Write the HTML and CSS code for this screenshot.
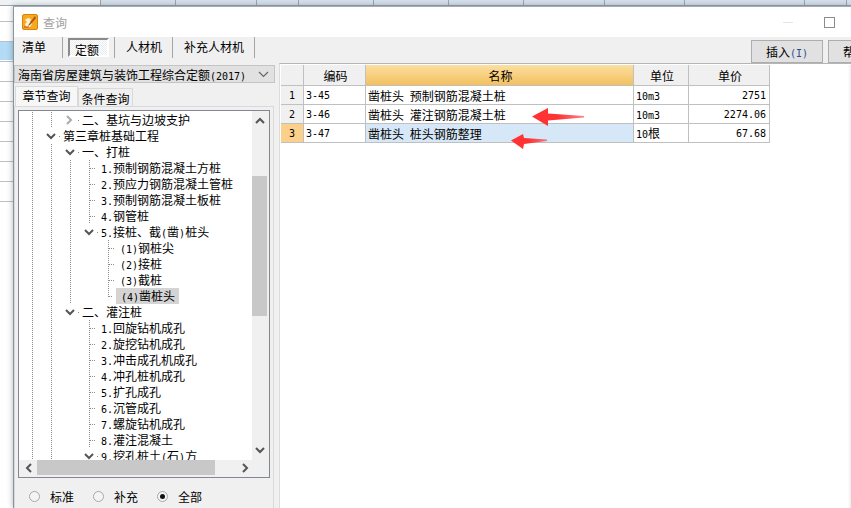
FILE: index.html
```html
<!doctype html>
<html lang="zh-CN">
<head>
  <meta charset="utf-8" />
  <meta name="viewport" content="width=device-width,initial-scale=1" />
  <title>查询</title>
  <link rel="stylesheet" href="styles.css">
</head>
<body>
<div class="desk">
  <div class="sheet-top">
    <i class="c1"></i><i class="c2"></i><i class="c3"></i><i class="c4"></i><i class="c2"></i><i class="c2"></i><i class="c2"></i><i class="c3"></i><i class="c5"></i><i class="c6"></i><i class="c4"></i>
  </div>
  <div class="sheet-left"></div>

  <div class="window">
    <div class="titlebar">
      <svg class="app-icon" width="16" height="16" viewBox="0 0 16 16">
        <rect x="0.5" y="0.5" width="15" height="15" rx="1.5" fill="#f6a81f" stroke="#d9820c"/>
        <path d="M3 6c2-2 4-2 6-1l-1 3 2 2-2 3H4l-1-3 2-2z" fill="#fdf3d6"/>
        <path d="M13 2L7 10l-1 2 2-1 6-7z" fill="#a8521a"/>
        <path d="M2 13h5" stroke="#c4441a"/>
      </svg>
      <span class="win-title">查询</span>
      <span class="win-min"></span>
      <span class="win-max"></span>
    </div>

    <div class="toolbar">
      <div class="tool tool-first">清单</div>
      <div class="tool tool-mid"><span class="pressed">定额</span></div>
      <div class="tool">人材机</div>
      <div class="tool">补充人材机</div>
      <div class="actions">
        <button class="btn">插入<span class="num accel">(I)</span></button>
        <button class="btn">帮助<span class="num accel">(H)</span></button>
      </div>
    </div>

    <div class="main">
      <div class="left">
        <div class="combo">
          <span>海南省房屋建筑与装饰工程综合定额<span class="num">(2017)</span></span>
          <svg width="11" height="7" viewBox="0 0 11 7"><path d="M1 1l4.500 4.500L10 1" fill="none" stroke="#666" stroke-width="1.200"/></svg>
        </div>
        <div class="tabs">
          <div class="tab active">章节查询</div>
          <div class="tab">条件查询</div>
        </div>
        <div class="pane">
          <div class="treebox">
            <div class="tree-top">
              <div class="tree">
                <div class="row"><i class="g"></i><i class="g"></i><i class="x"><svg width="7" height="10" viewBox="0 0 7 10"><path d="M1 1l4 4-4 4" fill="none" stroke="#aaa" stroke-width="2"/></svg></i><span class="label">二、基坑与边坡支护</span></div>
                <div class="row"><i class="g"></i><i class="x"><svg width="10" height="7" viewBox="0 0 10 7"><path d="M1 1l4 4 4-4" fill="none" stroke="#555" stroke-width="2"/></svg></i><span class="label">第三章桩基础工程</span></div>
                <div class="row"><i class="g"></i><i class="g"></i><i class="x"><svg width="10" height="7" viewBox="0 0 10 7"><path d="M1 1l4 4 4-4" fill="none" stroke="#555" stroke-width="2"/></svg></i><span class="label">一、打桩</span></div>
                <div class="row"><i class="g"></i><i class="g"></i><i class="g"></i><i class="g tee"></i><span class="label"><span class="num">1.</span>预制钢筋混凝土方桩</span></div>
                <div class="row"><i class="g"></i><i class="g"></i><i class="g"></i><i class="g tee"></i><span class="label"><span class="num">2.</span>预应力钢筋混凝土管桩</span></div>
                <div class="row"><i class="g"></i><i class="g"></i><i class="g"></i><i class="g tee"></i><span class="label"><span class="num">3.</span>预制钢筋混凝土板桩</span></div>
                <div class="row"><i class="g"></i><i class="g"></i><i class="g"></i><i class="g tee"></i><span class="label"><span class="num">4.</span>钢管桩</span></div>
                <div class="row"><i class="g"></i><i class="g"></i><i class="g"></i><i class="x"><svg width="10" height="7" viewBox="0 0 10 7"><path d="M1 1l4 4 4-4" fill="none" stroke="#555" stroke-width="2"/></svg></i><span class="label"><span class="num">5.</span>接桩、截<span class="num">(</span>凿<span class="num">)</span>桩头</span></div>
                <div class="row"><i class="g"></i><i class="g"></i><i class="g"></i><i class="b"></i><i class="g tee"></i><span class="label"><span class="num">(1)</span>钢桩尖</span></div>
                <div class="row"><i class="g"></i><i class="g"></i><i class="g"></i><i class="b"></i><i class="g tee"></i><span class="label"><span class="num">(2)</span>接桩</span></div>
                <div class="row"><i class="g"></i><i class="g"></i><i class="g"></i><i class="b"></i><i class="g tee"></i><span class="label"><span class="num">(3)</span>截桩</span></div>
                <div class="row"><i class="g"></i><i class="g"></i><i class="g"></i><i class="b"></i><i class="g elbow"></i><span class="label selected"><span class="num">(4)</span>凿桩头</span></div>
                <div class="row"><i class="g"></i><i class="g"></i><i class="x"><svg width="10" height="7" viewBox="0 0 10 7"><path d="M1 1l4 4 4-4" fill="none" stroke="#555" stroke-width="2"/></svg></i><span class="label">二、灌注桩</span></div>
                <div class="row"><i class="g"></i><i class="g"></i><i class="b"></i><i class="g tee"></i><span class="label"><span class="num">1.</span>回旋钻机成孔</span></div>
                <div class="row"><i class="g"></i><i class="g"></i><i class="b"></i><i class="g tee"></i><span class="label"><span class="num">2.</span>旋挖钻机成孔</span></div>
                <div class="row"><i class="g"></i><i class="g"></i><i class="b"></i><i class="g tee"></i><span class="label"><span class="num">3.</span>冲击成孔机成孔</span></div>
                <div class="row"><i class="g"></i><i class="g"></i><i class="b"></i><i class="g tee"></i><span class="label"><span class="num">4.</span>冲孔桩机成孔</span></div>
                <div class="row"><i class="g"></i><i class="g"></i><i class="b"></i><i class="g tee"></i><span class="label"><span class="num">5.</span>扩孔成孔</span></div>
                <div class="row"><i class="g"></i><i class="g"></i><i class="b"></i><i class="g tee"></i><span class="label"><span class="num">6.</span>沉管成孔</span></div>
                <div class="row"><i class="g"></i><i class="g"></i><i class="b"></i><i class="g tee"></i><span class="label"><span class="num">7.</span>螺旋钻机成孔</span></div>
                <div class="row"><i class="g"></i><i class="g"></i><i class="b"></i><i class="g tee"></i><span class="label"><span class="num">8.</span>灌注混凝土</span></div>
                <div class="row"><i class="g"></i><i class="g"></i><i class="b"></i><i class="x"><svg width="10" height="7" viewBox="0 0 10 7"><path d="M1 1l4 4 4-4" fill="none" stroke="#555" stroke-width="2"/></svg></i><span class="label"><span class="num">9.</span>挖孔桩土<span class="num">(</span>石<span class="num">)</span>方</span></div>
              </div>
              <div class="vscroll">
                <svg width="10" height="7" viewBox="0 0 10 7"><path d="M1 6l4-4 4 4" fill="none" stroke="#555" stroke-width="2"/></svg>
                <div class="vtrack"><div class="vthumb"></div></div>
                <svg width="10" height="7" viewBox="0 0 10 7"><path d="M1 1l4 4 4-4" fill="none" stroke="#555" stroke-width="2"/></svg>
              </div>
            </div>
            <div class="hscroll">
              <span class="harrow"><svg width="7" height="10" viewBox="0 0 7 10"><path d="M6 1L2 5l4 4" fill="none" stroke="#555" stroke-width="2"/></svg></span>
              <div class="hthumb"></div>
              <span class="harrow harrow-r"><svg width="7" height="10" viewBox="0 0 7 10"><path d="M1 1l4 4-4 4" fill="none" stroke="#555" stroke-width="2"/></svg></span>
            </div>
          </div>
          <div class="radios">
            <label class="radio"><i class="dot"></i>标准</label>
            <label class="radio"><i class="dot"></i>补充</label>
            <label class="radio"><i class="dot on"></i>全部</label>
          </div>
        </div>
      </div>

      <div class="right">
        <table class="grid">
          <thead>
            <tr><th class="rn"></th><th class="code">编码</th><th class="name cur">名称</th><th class="unit">单位</th><th class="price">单价</th></tr>
          </thead>
          <tbody>
            <tr><td class="rn num">1</td><td class="num">3-45</td><td class="txt">凿桩头 预制钢筋混凝土桩</td><td><span class="num">10m3</span></td><td class="num amt">2751</td></tr>
            <tr><td class="rn num">2</td><td class="num">3-46</td><td class="txt">凿桩头 灌注钢筋混凝土桩</td><td><span class="num">10m3</span></td><td class="num amt">2274.06</td></tr>
            <tr class="sel"><td class="rn num">3</td><td class="num">3-47</td><td class="txt">凿桩头 桩头钢筋整理</td><td><span class="num">10</span>根</td><td class="num amt">67.68</td></tr>
          </tbody>
        </table>
      </div>
    </div>
  </div>

  <!-- red arrows drawn over the grid -->
  <svg class="arrow arrow-a" width="54" height="18" viewBox="0 0 54 18">
    <defs><linearGradient id="fade" x1="0" x2="1" y1="0" y2="0"><stop offset="0.5" stop-color="#ff3333"/><stop offset="1" stop-color="#ff3333" stop-opacity="0.6"/></linearGradient></defs>
    <path d="M1 8.500L17 0v5.500l36 2.500v1.500L17 12.500V18z" fill="url(#fade)"/>
  </svg>
  <svg class="arrow arrow-b" width="38" height="16" viewBox="0 0 38 16">
    <path d="M1 7.500L13 1l1 4 23 1.500v1.500L14 11l-1 5z" fill="url(#fade)"/>
  </svg>
</div>
</body>
</html>
```

FILE: styles.css
```css
:root{
  --face:#f0f0f0; --line:#c0c0c0; --btn:#e1e1e1; --btn-line:#adadad;
  font-family: "Noto Sans CJK SC", "Liberation Sans", sans-serif;
  font-size:12px;
}
html,body{margin:0;padding:0;background:#fff;color:#000}
.num{font-family:"DejaVu Sans Mono","Liberation Mono",monospace;font-size:10px}

/* spreadsheet behind the dialog */
.desk{position:relative;width:851px;height:508px;overflow:hidden;background:#fff}
.desk::after{content:"";position:absolute;right:0;top:65px;bottom:0;width:3px;background:linear-gradient(90deg,#fff,#ececec)}
.sheet-top{display:flex;height:6px;background:#d6e0ea;border-bottom:1px solid #9aa7b3;box-sizing:border-box}
.sheet-top i{display:block;box-sizing:border-box;height:100%;border-right:1px solid #9aa7b3}
.sheet-top .c1{width:101px;background:#eef2f5}
.sheet-top .c2{width:75px}
.sheet-top .c3{width:81px}
.sheet-top .c4{width:42px}
.sheet-top .c5{width:80px}
.sheet-top .c6{width:120px}
.sheet-left{position:absolute;left:0;top:6px;width:13px;height:215px;background:
  linear-gradient(#b3dbf5,#b3dbf5) 0 36px/100% 18px no-repeat,
  repeating-linear-gradient(transparent 0 15px,#b9c2c9 15px 16px,transparent 16px 20px) 0 0/100% 100%}

/* dialog */
.window{position:absolute;left:13px;top:6px;right:0;bottom:0;overflow:hidden;background:var(--face);border-left:1px solid #87949f;border-top:1px solid #a3adb6;box-shadow:0 0 6px rgba(0,0,0,.3)}
.titlebar{display:flex;align-items:center;height:30px;background:#fff;padding:0 16px 0 8px}
.app-icon{flex:none}
.win-title{margin-left:5px;color:#a0a0a0}
.win-min{margin-left:auto;width:10px;height:1px;background:#e4e4e4}
.win-max{margin-left:31px;width:9px;height:9px;border:1px solid #8c8c8c}

.toolbar{display:flex;align-items:flex-start;height:27px}
.tool{height:21px;line-height:20px;padding:0 10px 0 11px;border-right:1px solid #a5a5a5}
.tool-first{width:40px;padding:0 0 0 8px}
.tool-mid{display:flex;width:41px;padding:0 5px;justify-content:center}
.pressed{box-sizing:border-box;display:block;width:41px;height:19px;margin-top:1px;padding-left:5px;line-height:20px;
  border:2px solid;border-color:#8a8a8a #fff #fff #8a8a8a;background:repeating-conic-gradient(#fff 0 25%,#ececec 0 50%) 0 0/2px 2px}
.actions{display:flex;gap:5px;margin:3px -49px 0 auto}
.btn{box-sizing:border-box;width:72px;height:23px;padding:0;background:var(--btn);border:1px solid var(--btn-line);font:inherit;color:#000}
.accel{color:#1f4f8f}

.main{display:flex;height:445px}
.left{width:265px;flex:none;padding-top:1px}
.combo{display:flex;align-items:center;justify-content:space-between;box-sizing:border-box;width:261px;height:18px;padding:0 5px 0 3px;background:var(--btn);border:1px solid #c4c4c4}
.tabs{display:flex;align-items:flex-end;height:20px;margin:3px 0 0 1px}
.tab{box-sizing:border-box;width:55px;height:18px;line-height:19px;text-align:center;background:var(--face);border:1px solid #d9d9d9;border-bottom:none}
.tab.active{width:63px;height:20px;background:#f7f7f7;line-height:18px}
.pane{box-sizing:border-box;width:260px;height:402px;padding:3px;border:1px solid #d9d9d9;border-bottom:none}
.treebox{box-sizing:border-box;height:368px;border:1px solid #828790;background:var(--face)}
.tree-top{display:flex;height:349px}
.tree{flex:1;overflow:hidden;background:#fff;padding-top:1px}
.row{display:flex;height:16px;line-height:16px;white-space:nowrap}
.row i{display:block;flex:none;width:19px;height:16px}
.g{background:repeating-linear-gradient(#8a8a8a 0 1px,transparent 1px 2px) 13px 0/1px 100% no-repeat}
.g.tee{background:
  repeating-linear-gradient(#8a8a8a 0 1px,transparent 1px 2px) 13px 0/1px 100% no-repeat,
  repeating-linear-gradient(90deg,#8a8a8a 0 1px,transparent 1px 2px) 14px 8px/8px 1px no-repeat}
.g.elbow{background:
  repeating-linear-gradient(#8a8a8a 0 1px,transparent 1px 2px) 13px 0/1px 9px no-repeat,
  repeating-linear-gradient(90deg,#8a8a8a 0 1px,transparent 1px 2px) 14px 8px/4px 1px no-repeat}
.row .x{display:flex;align-items:center;justify-content:center;padding-left:6px;box-sizing:border-box}
.label{padding-left:6px}
.x + .label{background:linear-gradient(#8a8a8a,#8a8a8a) 2px 8px/1px 1px no-repeat}
.label.selected{margin-left:2px;padding:0 4px 0 5px;background:#d4d4d4}
.vscroll{display:flex;flex-direction:column;align-items:center;box-sizing:border-box;width:17px;flex:none;padding:6px 2px 6px 0}
.vtrack{flex:1;width:15px;padding-top:52px}
.vthumb{height:140px;background:#c8c8c8}
.hscroll{display:flex;align-items:center;height:15px}
.harrow{display:flex;justify-content:center;width:18px}
.hthumb{width:178px;height:15px;background:#c8c8c8}
.harrow-r{margin-left:21px}

.radios{display:flex;gap:19px;margin:12px 0 0 11px}
.radio{display:flex;align-items:center;gap:10px;height:12px}
.dot{position:relative;display:block;box-sizing:border-box;width:11px;height:11px;border:1px solid #a8a8a8;border-radius:50%;background:#f4f4f4}
.dot.on::after{content:"";position:absolute;left:2px;top:2px;width:5px;height:5px;border-radius:50%;background:#111}

/* result grid */
.right{flex:1;background:#fff;border-top:1px solid #b5b5b5;border-left:1px solid #dcdcdc;padding:1px 0 0 1px;margin-top:-1px}
.grid{table-layout:fixed;width:489px;border-collapse:separate;border-spacing:0}
.grid th,.grid td{box-sizing:border-box;padding:0 0 0 2px;border-right:1px solid var(--line);border-bottom:1px solid var(--line);white-space:nowrap;overflow:hidden}
.grid th{height:21px;font-weight:400;text-align:center;background:var(--face)}
.grid td{height:19px;line-height:15px}
.grid .rn{width:23px;text-align:center;padding:0;background:var(--face)}
.grid .code{width:62px}
.grid .name{width:268px}
.grid .unit{width:55px}
.grid .price{width:81px}
.grid th.cur{background:linear-gradient(#fbdfa1,#f3c05f)}
.grid .txt{word-spacing:3px}
.grid .amt{text-align:right;padding:0 3px 0 0}
.grid .sel .rn{background:#fbd08a}
.grid .sel .txt{background:#d6e8f7}

.arrow{position:absolute}
.arrow-a{left:531px;top:108px}
.arrow-b{left:510px;top:133px}
```
